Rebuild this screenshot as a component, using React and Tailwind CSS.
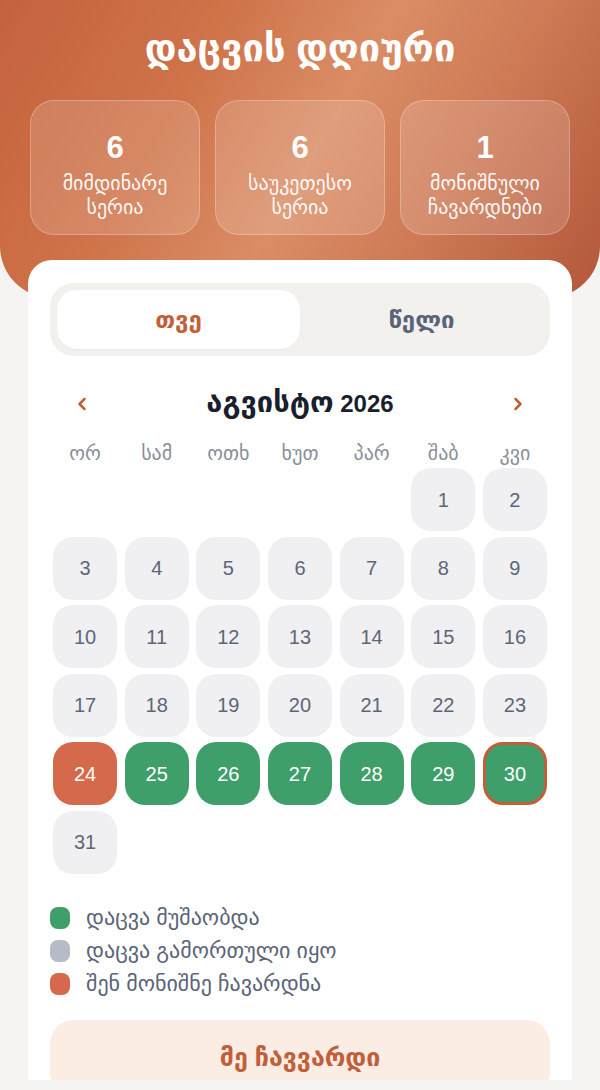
import { ChevronLeft, ChevronRight } from 'lucide-react'

const weekdays = ['ორ', 'სამ', 'ოთხ', 'ხუთ', 'პარ', 'შაბ', 'კვი']

const green = new Set([25, 26, 27, 28, 29, 30])

function StatCard({ value, label }) {
    return (
        <div className="flex flex-col items-center pt-[29px] rounded-[24px] border border-white/25 bg-white/15 h-[135px] text-white">
            <p className="text-[31px] font-bold leading-[36px]">{value}</p>
            <p className="mt-[5px] text-[20px] leading-[24px] text-center whitespace-pre-line text-white/95">{label}</p>
        </div>
    )
}

function DayCell({ day }) {
    if (!day) return <div className="h-[63px]" />
    let cls = 'bg-[#f0f0f2] text-[#5d6678]'
    if (day === 24) cls = 'bg-[#d46a4b] text-white'
    if (green.has(day)) cls = 'bg-[#3f9f6b] text-white'
    const today = day === 30
    return (
        <div
            className={`h-[63px] rounded-[20px] flex items-center justify-center text-[20px] ${cls} ${today ? 'border-[3px] border-[#c0603a]' : ''}`}
        >
            {day}
        </div>
    )
}

export default function App() {
    // August 2026 starts on Saturday (Mon-first grid)
    const cells = [null, null, null, null, null]
    for (let d = 1; d <= 31; d++) cells.push(d)

    return (
        <div className="w-[600px] h-[1090px] bg-[#f5f4f2] font-['Liberation_Sans','DejaVu_Sans',sans-serif]">
            <div className="h-[1080px] overflow-hidden">
                {/* Header */}
                <div className="h-[298px] rounded-b-[52px] bg-[linear-gradient(120deg,#c4623d_0%,#cf7349_30%,#da8d65_52%,#cd7a55_72%,#b3573b_100%)] px-[30px] pt-[24px]">
                    <h1 className="text-center text-white text-[38px] font-bold leading-[48px]">დაცვის დღიური</h1>
                    <div className="grid grid-cols-3 gap-[15px] mt-[28px]">
                        <StatCard value="6" label={'მიმდინარე\nსერია'} />
                        <StatCard value="6" label={'საუკეთესო\nსერია'} />
                        <StatCard value="1" label={'მონიშნული\nჩავარდნები'} />
                    </div>
                </div>

                {/* Card */}
                <div className="mx-[28px] -mt-[38px] relative bg-white rounded-[24px] px-[22px] pt-[23px] pb-[40px]">
                    <div className="bg-[#f3f1ee] rounded-[24px] p-[7px] flex">
                        <div className="flex-1 h-[59px] bg-white rounded-[20px] flex items-center justify-center text-[24px] font-bold text-[#c0603a] shadow-[0_1px_2px_rgba(0,0,0,0.04)]">
                            თვე
                        </div>
                        <div className="flex-1 h-[59px] flex items-center justify-center text-[24px] font-bold text-[#5a6478]">
                            წელი
                        </div>
                    </div>

                    <div className="flex items-center justify-between mt-[30px] px-[22px] h-[36px]">
                        <ChevronLeft size={20} strokeWidth={3} className="text-[#c0603a]" />
                        <h2 className="font-bold text-[#1a1f2e] leading-[36px]">
                            <span className="text-[29px]">აგვისტო</span>
                            <span className="text-[24px]"> 2026</span>
                        </h2>
                        <ChevronRight size={20} strokeWidth={3} className="text-[#c0603a]" />
                    </div>

                    <div className="px-[3px]">
                        <div className="grid grid-cols-7 gap-x-[7.5px] mt-[19px] mb-[3px]">
                            {weekdays.map((w) => (
                                <div key={w} className="text-center text-[20px] leading-[24px] text-[#8a8f9a]">
                                    {w}
                                </div>
                            ))}
                        </div>
                        <div className="grid grid-cols-7 gap-x-[7.5px] gap-y-[5.5px]">
                            {cells.map((d, i) => (
                                <DayCell key={i} day={d} />
                            ))}
                        </div>
                    </div>

                    <div className="flex flex-col gap-[13px] mt-[34px]">
                        {[
                            { color: 'bg-[#3f9f6b]', label: 'დაცვა მუშაობდა' },
                            { color: 'bg-[#b6bcc6]', label: 'დაცვა გამორთული იყო' },
                            { color: 'bg-[#d46a4b]', label: 'შენ მონიშნე ჩავარდნა' },
                        ].map(({ color, label }) => (
                            <div key={label} className="flex items-center gap-[16px] h-[20px]">
                                <span className={`w-[20px] h-[22px] rounded-[8px] ${color}`} />
                                <span className="text-[22px] leading-[20px] text-[#5a6478]">{label}</span>
                            </div>
                        ))}
                    </div>

                    <button className="w-full h-[76px] mt-[26px] rounded-[24px] bg-[#fbece4] text-[25px] font-bold text-[#c0603a]">
                        მე ჩავვარდი
                    </button>
                </div>
            </div>
        </div>
    )
}
